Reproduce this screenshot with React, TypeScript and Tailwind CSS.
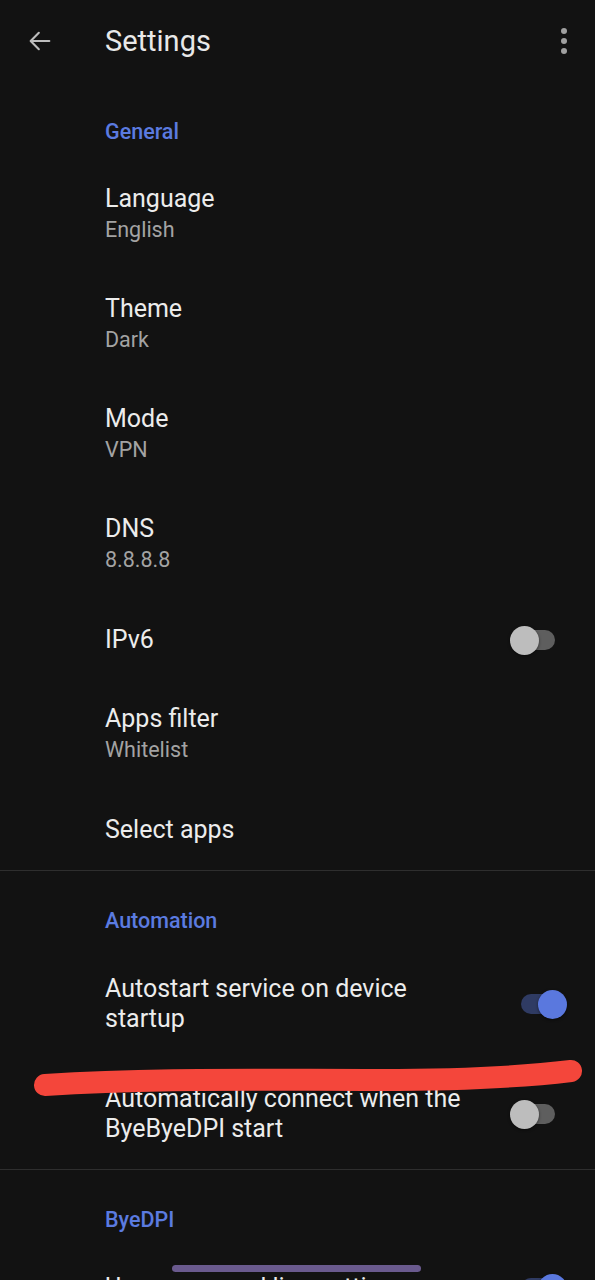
import React from "react";

type Row =
  | { kind: "category"; title: string; divider?: boolean }
  | { kind: "item"; title: string; summary?: string }
  | { kind: "switch"; title: string; lines?: string[]; on: boolean };

const rows: Row[] = [
  { kind: "category", title: "General" },
  { kind: "item", title: "Language", summary: "English" },
  { kind: "item", title: "Theme", summary: "Dark" },
  { kind: "item", title: "Mode", summary: "VPN" },
  { kind: "item", title: "DNS", summary: "8.8.8.8" },
  { kind: "switch", title: "IPv6", on: false },
  { kind: "item", title: "Apps filter", summary: "Whitelist" },
  { kind: "item", title: "Select apps" },
  { kind: "category", title: "Automation", divider: true },
  {
    kind: "switch",
    title: "Autostart service on device",
    lines: ["Autostart service on device", "startup"],
    on: true,
  },
  {
    kind: "switch",
    title: "Automatically connect when the",
    lines: ["Automatically connect when the", "ByeByeDPI start"],
    on: false,
  },
  { kind: "category", title: "ByeDPI", divider: true },
  {
    kind: "switch",
    title: "Use command line settings",
    lines: ["Use command line settings"],
    on: true,
  },
];

function Toggle({ on }: { on: boolean }) {
  return (
    <div className="relative h-[20px] w-[34px] shrink-0">
      <div
        className={`absolute inset-0 rounded-full ${on ? "bg-[#2f3b63]" : "bg-[#5e5e5e]"}`}
      />
      <div
        className={`absolute top-[-4px] h-[29px] w-[29px] rounded-full shadow-[0_1px_3px_rgba(0,0,0,0.5)] ${
          on ? "right-[-12px] bg-[#5a78de]" : "left-[-11px] bg-[#bdbdbd]"
        }`}
      />
    </div>
  );
}

function SettingsRow({ row }: { row: Row }) {
  if (row.kind === "category") {
    return (
      <div className={row.divider ? "border-t border-[#2e2e2e]" : ""}>
        <div className="pl-[105px] pt-[36px] pb-[14px] text-[21.5px] leading-[28px] font-medium text-[#5b7be0]">
          {row.title}
        </div>
      </div>
    );
  }
  if (row.kind === "item") {
    if (!row.summary) {
      return (
        <div className="flex h-[80px] items-center pl-[105px] text-[25px] leading-[30px] text-[#ececec]">
          {row.title}
        </div>
      );
    }
    return (
      <div className="flex h-[110px] flex-col justify-center pl-[105px]">
        <div className="text-[25px] leading-[30px] text-[#ececec]">{row.title}</div>
        <div className="text-[21.5px] leading-[32px] text-[#a3a3a3]">{row.summary}</div>
      </div>
    );
  }
  const lines = row.lines ?? [row.title];
  return (
    <div
      className={`flex items-center pl-[105px] pr-[40px] ${lines.length > 1 ? "h-[110px]" : "h-[80px]"}`}
    >
      <div className="flex-1 text-[25px] leading-[30px] text-[#ececec]">
        {lines.map((l) => (
          <div key={l} className="whitespace-nowrap">
            {l}
          </div>
        ))}
      </div>
      <Toggle on={row.on} />
    </div>
  );
}

export default function App() {
  return (
    <div
      className="relative h-[1280px] w-[595px] overflow-hidden bg-[#121212]"
      style={{ fontFamily: "Roboto, 'Noto Sans', sans-serif" }}
    >
      {/* toolbar */}
      <div className="flex h-[82px] items-center">
        <div className="flex w-[105px] items-center pl-[26px]">
          <svg width="28" height="28" viewBox="0 0 24 24" fill="none">
            <path
              d="M20 12H4.5M11 5l-7 7 7 7"
              stroke="#bdbdbd"
              strokeWidth="1.8"
              strokeLinecap="round"
              strokeLinejoin="round"
            />
          </svg>
        </div>
        <div className="flex-1 text-[29px] leading-[34px] text-[#e8e8e8]">Settings</div>
        <div className="flex flex-col items-center gap-[4px] pr-[28px]">
          <span className="h-[6px] w-[6px] rounded-full bg-[#a0a0a0]" />
          <span className="h-[6px] w-[6px] rounded-full bg-[#a0a0a0]" />
          <span className="h-[6px] w-[6px] rounded-full bg-[#a0a0a0]" />
        </div>
      </div>

      {rows.map((r, i) => (
        <SettingsRow key={i} row={r} />
      ))}

      {/* red marker scribble over the list */}
      <svg
        className="absolute left-0 top-[1050px]"
        width="595"
        height="60"
        viewBox="0 0 595 60"
      >
        <path
          d="M45 35 C 150 28, 250 30, 380 30 C 470 30, 530 26, 571 21"
          stroke="#f4463b"
          strokeWidth="22"
          strokeLinecap="round"
          fill="none"
        />
      </svg>

      {/* gesture nav pill */}
      <div className="absolute left-[172px] top-[1265px] h-[7px] w-[249px] rounded-full bg-[#6a5a8e]" />
    </div>
  );
}
